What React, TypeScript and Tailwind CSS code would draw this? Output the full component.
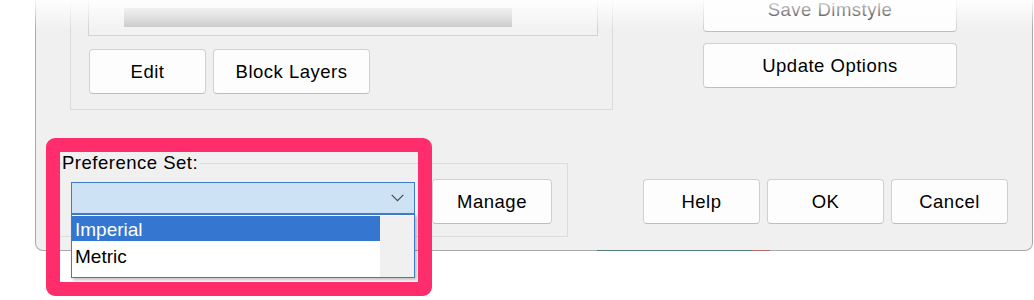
import React from "react";

const btn =
  "flex items-center justify-center h-[45px] bg-[#fdfdfd] border border-[#d0d0d0] border-b-[#bdbdbd] rounded-[4px] text-[18.5px] tracking-[0.5px] text-black";

export default function App() {
  return (
    <div className="relative w-[1034px] h-[300px] bg-white overflow-hidden font-['Liberation_Sans',Arial,sans-serif]">
      {/* Dialog */}
      <div className="ml-[35px] w-[998px] h-[251px] bg-[#f0f0f0] border-l border-r border-b border-[#a9a9a9] rounded-b-[8px] flex flex-col">
        {/* upper section */}
        <div className="flex items-start">
          <div className="ml-[34px] w-[543px] h-[110px] border-x border-b border-[#dadada] pl-[17px] pr-[14px]">
            <div className="w-[510px] h-[36px] border-x border-b border-[#d2d2d2] bg-[#f2f2f2] pt-[8px] pl-[35px]">
              <div className="w-[388px] h-[19px] bg-linear-to-b from-[#d6d6d6] to-[#c6c6c6]" />
            </div>
            <div className="flex gap-[7px] mt-[13px] ml-[1px]">
              <div className={`${btn} w-[117px]`}>Edit</div>
              <div className={`${btn} w-[157px]`}>Block Layers</div>
            </div>
          </div>
          <div className="ml-[90px] w-[254px] flex flex-col -mt-[13px]">
            <div className={`${btn} w-[254px] text-[#a8a8a8]`}>Save Dimstyle</div>
            <div className={`${btn} w-[254px] mt-[11px]`}>Update Options</div>
          </div>
        </div>

        {/* bottom section */}
        <div className="flex items-start mt-[42px]">
          <fieldset className="ml-[21px] w-[511px] border border-[#dcdcdc] pl-[4px] pr-[14px] pb-[12px]">
            <legend className="text-[18.5px] tracking-[0.5px] leading-[22px] text-black pr-[2px]">
              Preference Set:
            </legend>
            <div className="flex items-start">
              <div className="relative ml-[9px] mt-[8px] w-[344px] h-[32px] border border-[#3e7bc8] bg-[#cde2f5] flex items-center justify-end pr-[10px]">
                <svg width="13" height="8" viewBox="0 0 13 8" fill="none">
                  <polyline points="0.7,0.8 6.5,6.6 12.3,0.8" stroke="#4a4a4a" strokeWidth="1.2" />
                </svg>
                {/* open dropdown list */}
                <div className="absolute left-[-1px] top-[31px] w-[344px] h-[64px] border border-[#3e7bc8] bg-white flex pt-[1px] shadow-[2px_2px_3px_rgba(0,0,0,0.25)]">
                  <div className="w-[308px] flex flex-col text-[19px]">
                    <div className="h-[25px] leading-[28px] bg-[#3476d0] text-white pl-[3px]">Imperial</div>
                    <div className="h-[27px] leading-[31px] text-black pl-[3px]">Metric</div>
                  </div>
                  <div className="flex-1 bg-[#f0f0f0]" />
                </div>
              </div>
              <div className={`${btn} w-[120px] ml-[17px] mt-[5px]`}>Manage</div>
            </div>
          </fieldset>
          <div className="flex gap-[7px] ml-[75px] mt-[27px]">
            <div className={`${btn} w-[117px]`}>Help</div>
            <div className={`${btn} w-[117px]`}>OK</div>
            <div className={`${btn} w-[117px]`}>Cancel</div>
          </div>
        </div>
      </div>
      {/* desktop bits under dialog edge */}
      <div className="flex ml-[597px] -mt-[1px] h-[1px]">
        <div className="w-[155px] bg-[#4f7b7b]" />
        <div className="w-[18px] bg-[#b36a64]" />
      </div>

      {/* top fade */}
      <div className="absolute top-0 left-0 w-full h-[30px] bg-linear-to-b from-white/90 to-white/0" />

      {/* pink annotation frame */}
      <div className="absolute left-[46px] top-[138px] w-[386px] h-[158px] border-[14px] border-[#ff2d6c] rounded-[9px]" />
    </div>
  );
}
